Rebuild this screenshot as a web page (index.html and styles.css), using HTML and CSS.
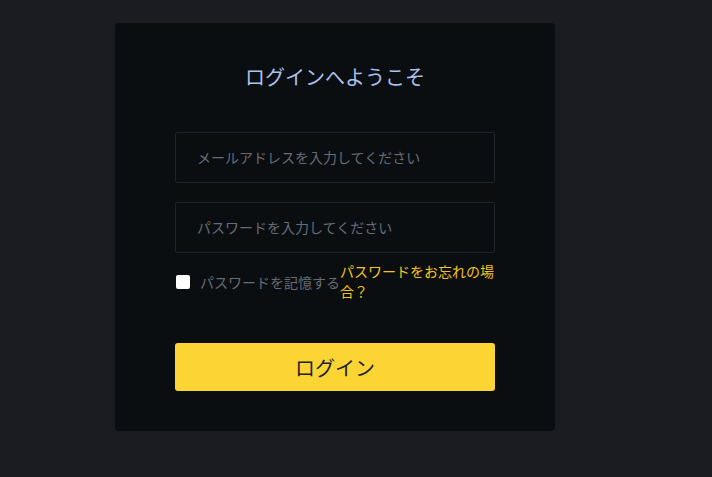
FILE: index.html
```html
<!DOCTYPE html>
<html lang="ja">
<head>
    <meta charset="UTF-8">
    <meta name="viewport" content="width=device-width, initial-scale=1.0">
    <title>ログイン</title>
    <link rel="stylesheet" href="styles.css">
</head>
<body>
    <div class="page">
        <!-- Login card -->
        <div class="login-card">
            <h1 class="login-title">ログインへようこそ</h1>
            <form class="login-form">
                <input type="email" class="field" placeholder="メールアドレスを入力してください">
                <input type="password" class="field" placeholder="パスワードを入力してください">
                <div class="options">
                    <label class="remember">
                        <input type="checkbox">
                        <span>パスワードを記憶する</span>
                    </label>
                    <a href="#" class="forgot">パスワードをお忘れの場合？</a>
                </div>
                <button type="submit" class="login-btn">ログイン</button>
            </form>
        </div>
    </div>
</body>
</html>
```

FILE: styles.css
```css
:root {
    --page-bg: #1b1c21;
    --card-bg: #0b0e11;
    --border: #1e2329;
    --accent: #fcd535;
    --link: #f5c518;
    --muted: #676c75;
    --font-family: "Noto Sans", "Noto Sans CJK JP", sans-serif;
}

body {
    margin: 0;
    padding: 0;
    background-color: var(--page-bg);
    font-family: var(--font-family);
}

.page {
    padding: 23px 0 0 115px;
}

.login-card {
    width: 440px;
    height: 408px;
    box-sizing: border-box;
    padding: 41px 60px;
    background-color: var(--card-bg);
    border-radius: 4px;
}

.login-title {
    margin: 0 0 40px;
    font-size: 20px;
    font-weight: normal;
    line-height: 28px;
    text-align: center;
    color: #adc1ea;
}

.login-form {
    display: flex;
    flex-direction: column;
}

.field {
    height: 51px;
    box-sizing: border-box;
    padding: 0 21px;
    margin-bottom: 19px;
    background-color: var(--card-bg);
    border: 1px solid var(--border);
    border-radius: 2px;
    font-family: var(--font-family);
    font-size: 14px;
    color: #eaecef;
    outline: none;
}

.field::placeholder {
    color: var(--muted);
}

.options {
    display: flex;
    align-items: center;
    margin-top: -10px;
    margin-bottom: 41px;
}

.remember {
    display: flex;
    align-items: center;
    flex-shrink: 0;
    color: var(--muted);
    font-size: 14px;
}

.remember input {
    appearance: none;
    width: 14px;
    height: 14px;
    margin: 0 10px 0 1px;
    background-color: #fff;
    border-radius: 2px;
}

.forgot {
    color: var(--link);
    text-decoration: none;
    font-size: 14px;
    line-height: 20px;
}

.login-btn {
    height: 48px;
    background-color: var(--accent);
    border: none;
    border-radius: 3px;
    color: #1e2329;
    font-family: var(--font-family);
    font-size: 20px;
    cursor: pointer;
}
```
